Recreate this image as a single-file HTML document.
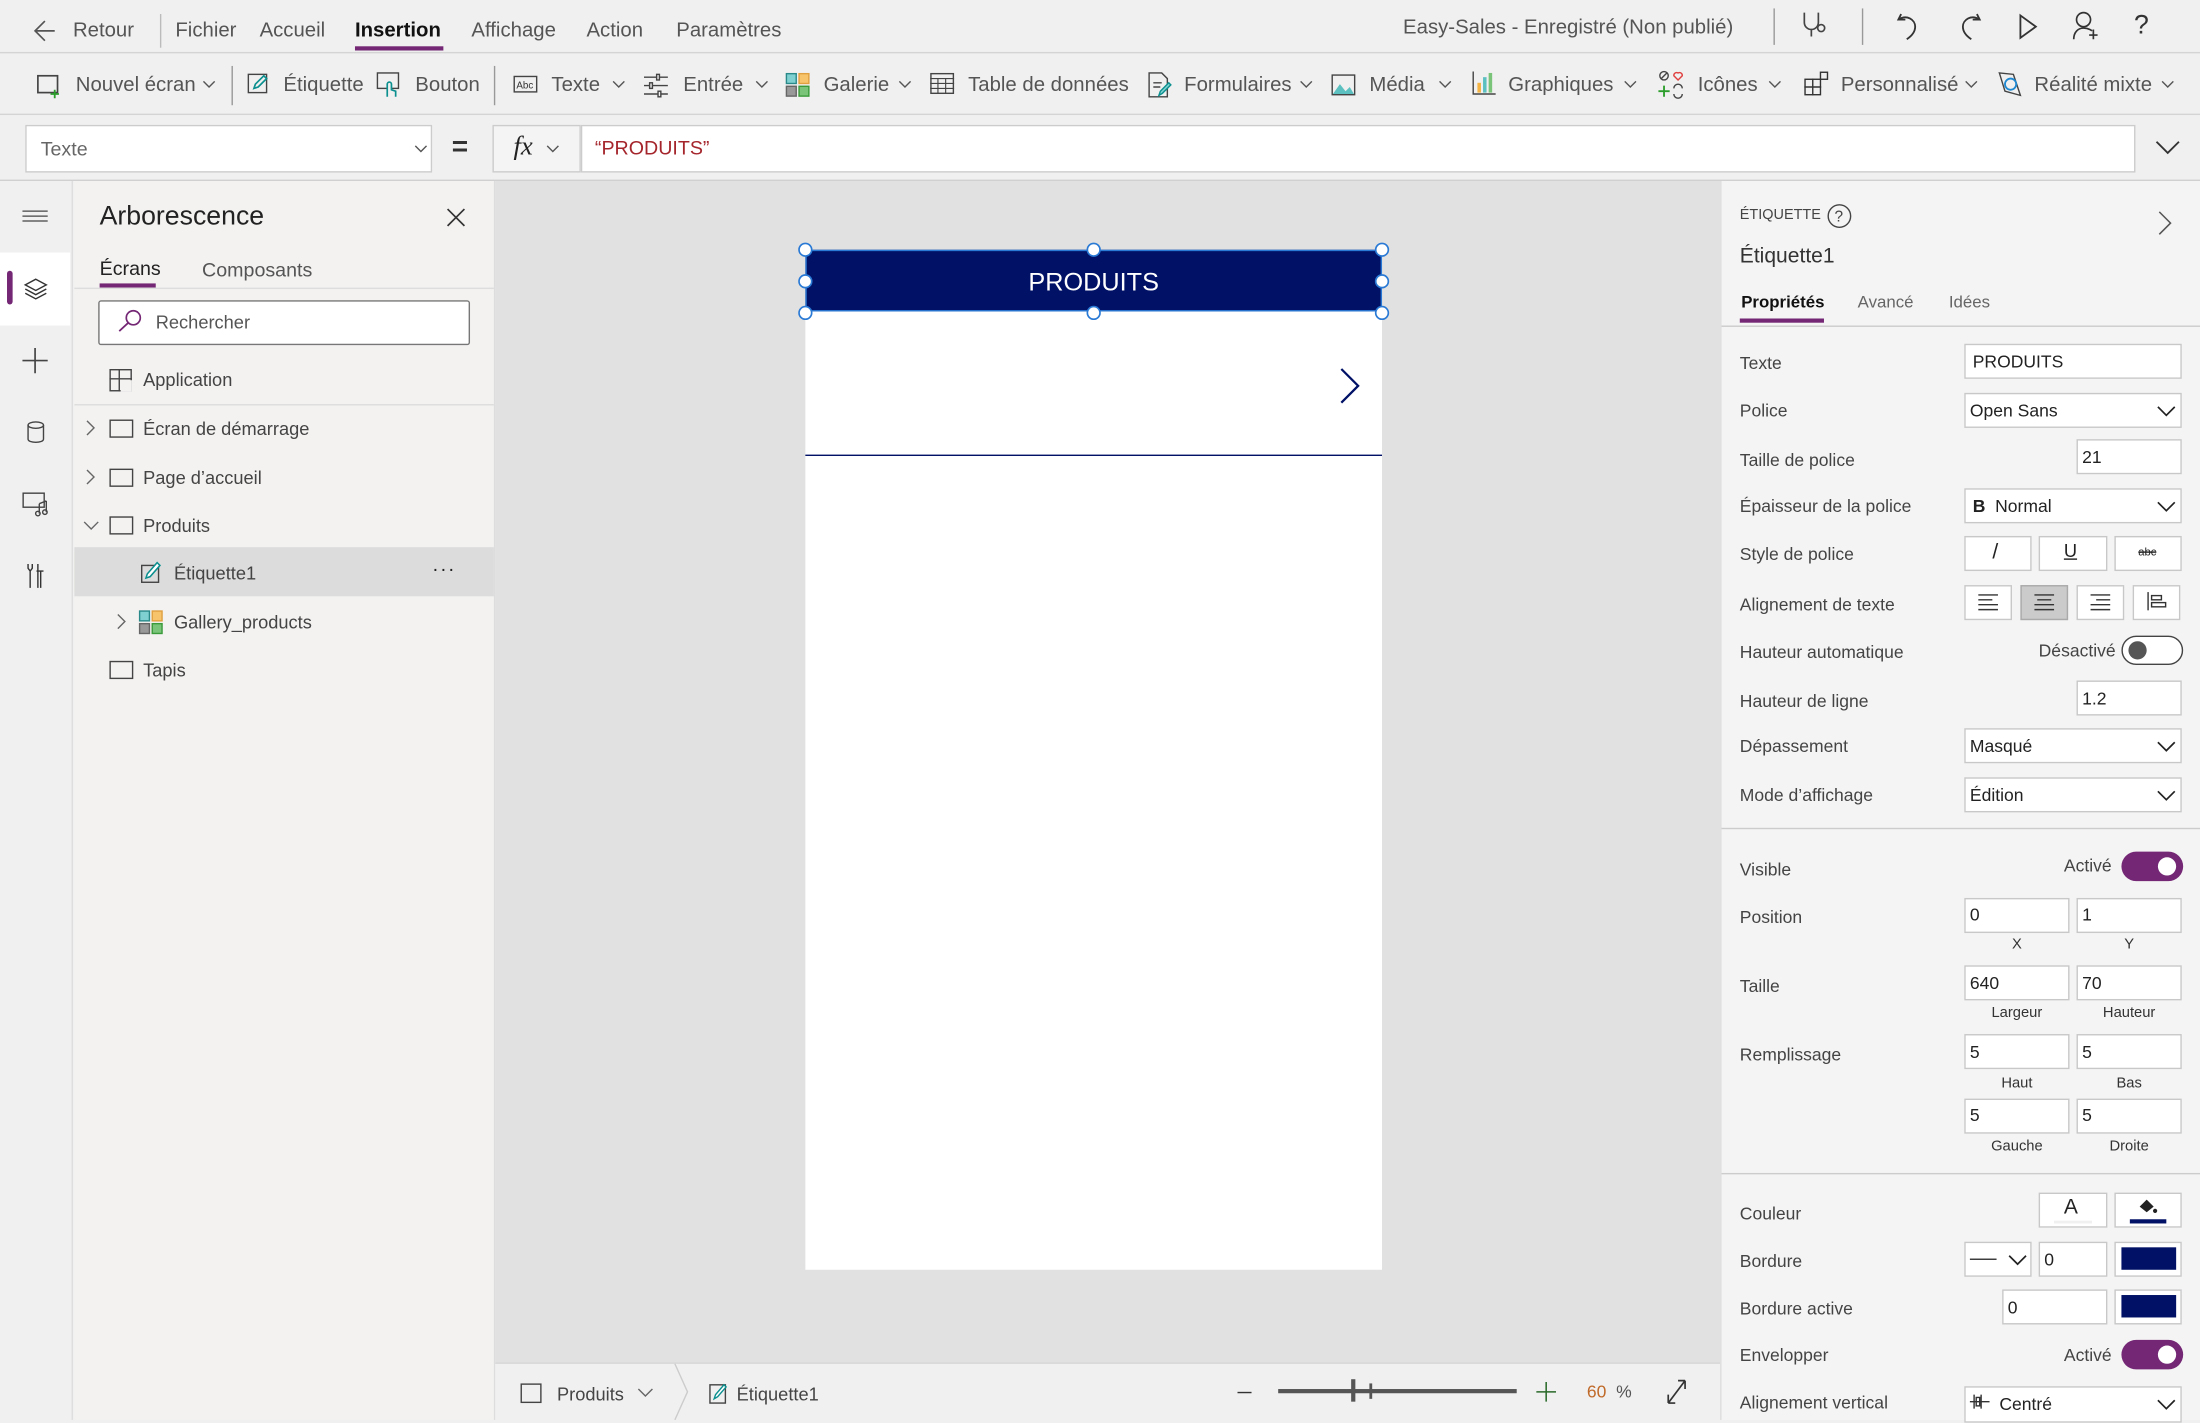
<!DOCTYPE html>
<html><head><meta charset="utf-8">
<style>
*{box-sizing:border-box;margin:0;padding:0}
html,body{width:2200px;height:1419px;overflow:hidden;background:#f0f0f0}
#r{position:absolute;left:0;top:0;width:1568px;height:1012px;transform:scale(1.40306);transform-origin:0 0;font-family:"Liberation Sans",sans-serif;color:#333}
.a{position:absolute}
.t{position:absolute;white-space:nowrap;line-height:1}
.b{position:absolute;background:#fff;border:1px solid #c8c8c8}
svg{position:absolute;overflow:visible}
.m{font-size:14.5px;color:#555}
.tb{font-size:14.5px;color:#555}
.lab{font-size:12.5px;color:#444}
.val{font-size:12.5px;color:#222}
.sm{font-size:10.5px;color:#333}
.tr{font-size:13px;color:#444}
</style></head><body><div id="r">

<!-- top menu -->
<div class="a" style="left:0;top:0;width:1568px;height:38px;background:#f0f0f0;border-bottom:1px solid #d4d4d4"></div>
<svg style="left:24px;top:14px" width="16" height="16"><path d="M15 8H1M8 1L1 8l7 7" fill="none" stroke="#555" stroke-width="1.2"/></svg>
<div class="t m" style="left:52px;top:15px">Retour</div>
<div class="a" style="left:114px;top:10px;width:1px;height:24px;background:#bbb"></div>
<div class="t m" style="left:125px;top:15px">Fichier</div>
<div class="t m" style="left:185px;top:15px">Accueil</div>
<div class="t m" style="left:253px;top:15px;font-weight:bold;color:#111">Insertion</div>
<div class="a" style="left:253px;top:33px;width:63px;height:3px;background:#742774"></div>
<div class="t m" style="left:336px;top:15px">Affichage</div>
<div class="t m" style="left:418px;top:15px">Action</div>
<div class="t m" style="left:482px;top:15px">Paramètres</div>
<div class="t m" style="left:1000px;top:13px">Easy-Sales - Enregistré (Non publié)</div>
<div class="a" style="left:1264px;top:6px;width:1px;height:26px;background:#999"></div>
<svg style="left:1284px;top:8px" width="18" height="22"><path d="M2 1v7a5 5 0 0 0 10 0V1M7 13v5" fill="none" stroke="#444" stroke-width="1.2"/><circle cx="14" cy="12" r="2.5" fill="none" stroke="#444" stroke-width="1.2"/></svg>
<div class="a" style="left:1327px;top:6px;width:1px;height:26px;background:#999"></div>
<svg style="left:1352px;top:8px" width="16" height="22"><path d="M3 2L1 6h5M1 6c6-4 12 0 12 5 0 4-3 7-6 9" fill="none" stroke="#333" stroke-width="1.3"/></svg>
<svg style="left:1396px;top:8px" width="16" height="22"><path d="M13 2l2 4h-5M15 6C9 2 3 6 3 11c0 4 3 7 6 9" fill="none" stroke="#333" stroke-width="1.3"/></svg>
<svg style="left:1439px;top:10px" width="14" height="18"><path d="M1 1l11 8-11 8z" fill="none" stroke="#333" stroke-width="1.3"/></svg>
<svg style="left:1477px;top:8px" width="20" height="22"><circle cx="8" cy="6" r="5" fill="none" stroke="#333" stroke-width="1.2"/><path d="M1 20c0-5 3-8 7-8s6 2 6 2M15 13v7M12 17h6" fill="none" stroke="#333" stroke-width="1.2"/></svg>
<div class="t" style="left:1521px;top:9px;font-size:19px;color:#333">?</div>

<!-- toolbar -->
<div class="a" style="left:0;top:39px;width:1568px;height:43px;background:#f0f0f0;border-bottom:1px solid #d4d4d4"></div>
<svg style="left:26px;top:53px" width="18" height="16"><rect x="1" y="1" width="14" height="12" fill="none" stroke="#444" stroke-width="1.2"/><path d="M13 11v6M10 14h6" stroke="#2a9d2a" stroke-width="1.3"/></svg>
<div class="t tb" style="left:54px;top:54px">Nouvel écran</div>
<svg style="left:144px;top:57px" width="10" height="6"><path d="M1 1l4 4 4-4" fill="none" stroke="#555"/></svg>
<div class="a" style="left:165px;top:47px;width:1px;height:28px;background:#999"></div>
<svg style="left:176px;top:52px" width="16" height="16"><rect x="1" y="1" width="13" height="13" fill="none" stroke="#444"/><path d="M5 11l1-3 6-6 2 2-6 6z" fill="none" stroke="#0b8f8f" stroke-width="1.2"/></svg>
<div class="t tb" style="left:202px;top:54px">Étiquette</div>
<svg style="left:268px;top:51px" width="18" height="20"><rect x="1" y="1" width="15" height="11" fill="none" stroke="#444"/><path d="M8 18v-9a1.5 1.5 0 0 1 3 0v4l3 1v4" fill="#f0f0f0" stroke="#0b8f8f" stroke-width="1.2"/></svg>
<div class="t tb" style="left:296px;top:54px">Bouton</div>
<div class="a" style="left:352px;top:47px;width:1px;height:28px;background:#999"></div>
<svg style="left:366px;top:54px" width="17" height="12"><rect x="0.5" y="0.5" width="16" height="11" fill="none" stroke="#444"/><text x="2" y="9" font-size="7" font-family="Liberation Sans" fill="#333">Abc</text></svg>
<div class="t tb" style="left:393px;top:54px">Texte</div>
<svg style="left:436px;top:57px" width="10" height="6"><path d="M1 1l4 4 4-4" fill="none" stroke="#555"/></svg>
<svg style="left:459px;top:52px" width="17" height="17"><path d="M0 3h17M0 9h17M0 15h17" stroke="#444"/><rect x="9" y="1" width="2" height="4" fill="#f0f0f0" stroke="#444"/><rect x="4" y="7" width="2" height="4" fill="#f0f0f0" stroke="#444"/><rect x="10" y="13" width="2" height="4" fill="#f0f0f0" stroke="#444"/></svg>
<div class="t tb" style="left:487px;top:54px">Entrée</div>
<svg style="left:538px;top:57px" width="10" height="6"><path d="M1 1l4 4 4-4" fill="none" stroke="#555"/></svg>
<svg style="left:560px;top:52px" width="17" height="17"><rect x="0.5" y="0.5" width="7" height="7" fill="#7fd0d0" stroke="#2a8a8a"/><rect x="9.5" y="0.5" width="7" height="7" fill="#f7c46c" stroke="#e0a040"/><rect x="0.5" y="9.5" width="7" height="7" fill="#999" stroke="#666"/><rect x="9.5" y="9.5" width="7" height="7" fill="#79c479" stroke="#3a9a3a"/></svg>
<div class="t tb" style="left:587px;top:54px">Galerie</div>
<svg style="left:640px;top:57px" width="10" height="6"><path d="M1 1l4 4 4-4" fill="none" stroke="#555"/></svg>
<svg style="left:663px;top:52px" width="17" height="15"><rect x="0.5" y="0.5" width="16" height="14" fill="none" stroke="#444"/><path d="M0 4h17M0 7.5h17M0 11h17M5.5 4v11M11 4v11" stroke="#444" stroke-width=".8"/></svg>
<div class="t tb" style="left:690px;top:54px">Table de données</div>
<svg style="left:818px;top:51px" width="17" height="19"><path d="M1 1h9l4 4v13H1z" fill="none" stroke="#444"/><path d="M4 8h6M4 11h5" stroke="#444"/><path d="M8 17l1-3 6-6 1.5 1.5-6 6z" fill="#7fd0d0" stroke="#0b8f8f"/></svg>
<div class="t tb" style="left:844px;top:54px">Formulaires</div>
<svg style="left:926px;top:57px" width="10" height="6"><path d="M1 1l4 4 4-4" fill="none" stroke="#555"/></svg>
<svg style="left:949px;top:53px" width="17" height="15"><rect x="0.5" y="0.5" width="16" height="14" fill="none" stroke="#444"/><path d="M1 14l5-7 4 5 3-3 3 5z" fill="#5cc0c0"/></svg>
<div class="t tb" style="left:976px;top:54px">Média</div>
<svg style="left:1025px;top:57px" width="10" height="6"><path d="M1 1l4 4 4-4" fill="none" stroke="#555"/></svg>
<svg style="left:1049px;top:51px" width="17" height="17"><path d="M1 0v16h16" fill="none" stroke="#444"/><rect x="4" y="8" width="2.5" height="7" fill="#f5b342"/><rect x="8" y="4" width="2.5" height="11" fill="#5cc0c0"/><rect x="12" y="1" width="2.5" height="14" fill="#79c479"/></svg>
<div class="t tb" style="left:1075px;top:54px">Graphiques</div>
<svg style="left:1157px;top:57px" width="10" height="6"><path d="M1 1l4 4 4-4" fill="none" stroke="#555"/></svg>
<svg style="left:1182px;top:50px" width="20" height="20"><circle cx="4" cy="4" r="3" fill="none" stroke="#444"/><path d="M2 6l4-4" stroke="#444"/><path d="M14 7l-3-3a2 2 0 0 1 3-2 2 2 0 0 1 3 2z" fill="none" stroke="#e04040"/><path d="M4 11v8M0 15h8" stroke="#2a9d2a" stroke-width="1.3"/><path d="M11 13a3 3 0 0 1 6 0M17 17a3 3 0 0 1-6 0" fill="none" stroke="#444"/></svg>
<div class="t tb" style="left:1210px;top:54px">Icônes</div>
<svg style="left:1260px;top:57px" width="10" height="6"><path d="M1 1l4 4 4-4" fill="none" stroke="#555"/></svg>
<svg style="left:1286px;top:51px" width="17" height="18"><rect x="0.5" y="5.5" width="11" height="11" fill="none" stroke="#333"/><path d="M6 5v12M0 11h12" stroke="#333"/><rect x="11.5" y="0.5" width="5" height="5" fill="none" stroke="#333"/></svg>
<div class="t tb" style="left:1312px;top:54px">Personnalisé</div>
<svg style="left:1400px;top:57px" width="10" height="6"><path d="M1 1l4 4 4-4" fill="none" stroke="#555"/></svg>
<svg style="left:1424px;top:51px" width="17" height="18"><path d="M1 1l10 1 5 15-11-3z" fill="none" stroke="#444"/><circle cx="9" cy="9" r="4" fill="none" stroke="#1e88d0" stroke-width="1.3"/></svg>
<div class="t tb" style="left:1450px;top:54px">Réalité mixte</div>
<svg style="left:1540px;top:57px" width="10" height="6"><path d="M1 1l4 4 4-4" fill="none" stroke="#555"/></svg>

<!-- formula bar -->
<div class="a" style="left:0;top:83px;width:1568px;height:46px;background:#f0f0f0;border-bottom:1px solid #d0d0d0"></div>
<div class="b" style="left:18px;top:89px;width:290px;height:34px;border-color:#ccc"></div>
<div class="t" style="left:29px;top:99px;font-size:14px;color:#666">Texte</div>
<svg style="left:295px;top:103px" width="10" height="6"><path d="M1 1l4 4 4-4" fill="none" stroke="#555"/></svg>
<div class="t" style="left:322px;top:95px;font-size:20px;font-weight:bold;color:#333">=</div>
<div class="a" style="left:351px;top:89px;width:63px;height:34px;background:#f4f4f4;border:1px solid #ccc"></div>
<div class="t" style="left:366px;top:95px;font-size:19px;font-style:italic;font-family:'Liberation Serif',serif;color:#222">fx</div>
<svg style="left:389px;top:103px" width="10" height="6"><path d="M1 1l4 4 4-4" fill="none" stroke="#555"/></svg>
<div class="b" style="left:414px;top:89px;width:1108px;height:34px;border-color:#ccc"></div>
<div class="t" style="left:424px;top:98px;font-size:14px;color:#a4262c">“PRODUITS”</div>
<svg style="left:1536px;top:100px" width="18" height="10"><path d="M1 1l8 8 8-8" fill="none" stroke="#333" stroke-width="1.3"/></svg>

<!-- left rail -->
<div class="a" style="left:0;top:129px;width:52px;height:883px;background:#f0f0f0;border-right:1px solid #ddd"></div>
<svg style="left:16px;top:150px" width="18" height="8"><path d="M0 .5h18M0 4h18M0 7.5h18" stroke="#444" stroke-width=".9"/></svg>
<div class="a" style="left:0;top:180px;width:50px;height:52px;background:#fff"></div>
<div class="a" style="left:5px;top:193px;width:4px;height:24px;background:#742774;border-radius:2px"></div>
<svg style="left:17px;top:198px" width="17" height="17"><path d="M8.5 1L16 5l-7.5 4L1 5z" fill="#fff" stroke="#333"/><path d="M1 8l7.5 4L16 8M1 11l7.5 4L16 11" fill="none" stroke="#333"/></svg>
<svg style="left:16px;top:248px" width="18" height="18"><path d="M9 0v18M0 9h18" stroke="#444" stroke-width="1.2"/></svg>
<svg style="left:19px;top:300px" width="13" height="16"><ellipse cx="6.5" cy="3" rx="5.5" ry="2.3" fill="none" stroke="#444"/><path d="M1 3v10c0 3 11 3 11 0V3" fill="none" stroke="#444"/></svg>
<svg style="left:16px;top:351px" width="20" height="17"><rect x="0.5" y="0.5" width="15" height="10" fill="none" stroke="#444"/><path d="M12 8v7M17 6v8M12 8l5-2" fill="none" stroke="#444"/><circle cx="11" cy="15" r="1.6" fill="none" stroke="#444"/><circle cx="16" cy="14" r="1.6" fill="none" stroke="#444"/></svg>
<svg style="left:18px;top:401px" width="14" height="19"><path d="M2 1v3l1.5 2L5 4V1M3.5 6v12M9 1v17M11 6v12M8 6h5" fill="none" stroke="#333"/></svg>

<!-- tree panel -->
<div class="a" style="left:53px;top:129px;width:300px;height:883px;background:#f3f2f1;border-right:1px solid #ddd"></div>
<div class="t" style="left:71px;top:145px;font-size:19px;color:#222;font-weight:500">Arborescence</div>
<svg style="left:318px;top:148px" width="14" height="14"><path d="M1 1l12 12M13 1L1 13" stroke="#333" stroke-width="1.2"/></svg>
<div class="t" style="left:71px;top:184px;font-size:14px;color:#222">Écrans</div>
<div class="a" style="left:71px;top:202px;width:40px;height:3px;background:#742774"></div>
<div class="t" style="left:144px;top:185px;font-size:14px;color:#555">Composants</div>
<div class="a" style="left:53px;top:205px;width:299px;height:1px;background:#ddd"></div>
<div class="b" style="left:70px;top:214px;width:265px;height:32px;border-color:#777;border-radius:2px"></div>
<svg style="left:84px;top:220px" width="18" height="18"><circle cx="11" cy="6.5" r="5" fill="none" stroke="#742774" stroke-width="1.2"/><path d="M7.5 10L1 16" stroke="#742774" stroke-width="1.3"/></svg>
<div class="t tr" style="left:111px;top:223px;color:#555">Rechercher</div>
<svg style="left:78px;top:263px" width="16" height="16"><rect x="0.5" y="0.5" width="15" height="15" fill="none" stroke="#444"/><path d="M7 0v16M0 7h16" stroke="#444"/><path d="M8 8h8v8H8z" fill="#f3f2f1"/></svg>
<div class="t tr" style="left:102px;top:264px">Application</div>
<div class="a" style="left:53px;top:288px;width:299px;height:1px;background:#ddd"></div>
<svg style="left:61px;top:299px" width="7" height="12"><path d="M1 1l5 5-5 5" fill="none" stroke="#666"/></svg>
<div class="a" style="left:78px;top:299px;width:17px;height:13px;border:1.2px solid #444"></div>
<div class="t tr" style="left:102px;top:299px">Écran de démarrage</div>
<svg style="left:61px;top:334px" width="7" height="12"><path d="M1 1l5 5-5 5" fill="none" stroke="#666"/></svg>
<div class="a" style="left:78px;top:334px;width:17px;height:13px;border:1.2px solid #444"></div>
<div class="t tr" style="left:102px;top:334px">Page d’accueil</div>
<svg style="left:59px;top:371px" width="12" height="7"><path d="M1 1l5 5 5-5" fill="none" stroke="#666"/></svg>
<div class="a" style="left:78px;top:368px;width:17px;height:13px;border:1.2px solid #444"></div>
<div class="t tr" style="left:102px;top:368px">Produits</div>
<div class="a" style="left:53px;top:390px;width:299px;height:35px;background:#dcdcdc"></div>
<svg style="left:100px;top:400px" width="16" height="16"><rect x="1" y="3" width="12" height="12" fill="none" stroke="#444"/><path d="M4 12l1-3 7-8 2 2-7 8z" fill="#fff" stroke="#0b8f8f" stroke-width="1.1"/></svg>
<div class="t tr" style="left:124px;top:402px">Étiquette1</div>
<div class="t" style="left:308px;top:398px;font-size:14px;color:#222;letter-spacing:1px">···</div>
<svg style="left:83px;top:437px" width="7" height="12"><path d="M1 1l5 5-5 5" fill="none" stroke="#666"/></svg>
<svg style="left:99px;top:435px" width="17" height="17"><rect x="0.5" y="0.5" width="7" height="7" fill="#7fd0d0" stroke="#2a8a8a"/><rect x="9.5" y="0.5" width="7" height="7" fill="#f7c46c" stroke="#e0a040"/><rect x="0.5" y="9.5" width="7" height="7" fill="#999" stroke="#666"/><rect x="9.5" y="9.5" width="7" height="7" fill="#79c479" stroke="#3a9a3a"/></svg>
<div class="t tr" style="left:124px;top:437px">Gallery_products</div>
<div class="a" style="left:78px;top:471px;width:17px;height:13px;border:1.2px solid #444"></div>
<div class="t tr" style="left:102px;top:471px">Tapis</div>

<!-- canvas -->
<div class="a" style="left:353px;top:129px;width:873px;height:842px;background:#e1e1e1"></div>
<div class="a" style="left:574px;top:178px;width:411px;height:727px;background:#fff"></div>
<div class="a" style="left:574px;top:178px;width:411px;height:44px;background:#001166;border:1px solid #2a7ad5"></div>
<div class="t" style="left:574px;top:192px;width:411px;text-align:center;font-size:18px;color:#fff">PRODUITS</div>
<svg style="left:569px;top:173px" width="422" height="55"><g fill="#fff" stroke="#2a7ad5" stroke-width="1.2"><circle cx="5" cy="5" r="4.5"/><circle cx="210.5" cy="5" r="4.5"/><circle cx="416" cy="5" r="4.5"/><circle cx="5" cy="27.5" r="4.5"/><circle cx="416" cy="27.5" r="4.5"/><circle cx="5" cy="50" r="4.5"/><circle cx="210.5" cy="50" r="4.5"/><circle cx="416" cy="50" r="4.5"/></g></svg>
<svg style="left:955px;top:262px" width="16" height="26"><path d="M1 1l12 12L1 25" fill="none" stroke="#001166" stroke-width="1.6"/></svg>
<div class="a" style="left:574px;top:324px;width:411px;height:1.3px;background:#001166"></div>

<!-- status bar -->
<div class="a" style="left:353px;top:971px;width:873px;height:41px;background:#f0f0f0;border-top:1px solid #d4d4d4"></div>
<div class="a" style="left:371px;top:986px;width:15px;height:14px;border:1.2px solid #444"></div>
<div class="t tr" style="left:397px;top:987px">Produits</div>
<svg style="left:454px;top:989px" width="12" height="7"><path d="M1 1l5 5 5-5" fill="none" stroke="#666"/></svg>
<svg style="left:480px;top:972px" width="12" height="40"><path d="M1 0l9 20-9 20" fill="none" stroke="#ccc"/></svg>
<svg style="left:505px;top:985px" width="15" height="16"><rect x="1" y="2" width="11" height="13" fill="none" stroke="#444"/><path d="M4 12l1-3 6-7 1.5 1.5-6 7z" fill="#fff" stroke="#0b8f8f"/></svg>
<div class="t tr" style="left:525px;top:987px">Étiquette1</div>
<div class="a" style="left:882px;top:992px;width:10px;height:1.2px;background:#333"></div>
<div class="a" style="left:911px;top:990px;width:170px;height:3px;background:#555"></div>
<div class="a" style="left:963px;top:983px;width:3px;height:16px;background:#555"></div>
<div class="a" style="left:976px;top:986px;width:1.5px;height:11px;background:#555"></div>
<svg style="left:1095px;top:985px" width="14" height="14"><path d="M7 0v14M0 7h14" stroke="#2a6a2a" stroke-width="1.1"/></svg>
<div class="t" style="left:1131px;top:986px;font-size:12.5px;color:#c06a2a">60 <span style="color:#555">&nbsp;%</span></div>
<svg style="left:1187px;top:983px" width="16" height="18"><path d="M2 17L14 1M2 17v-6M2 17h5M14 1v6M14 1H9" fill="none" stroke="#333" stroke-width="1.2"/></svg>

<!-- right panel -->
<div class="a" style="left:1226px;top:129px;width:342px;height:883px;background:#f4f4f4;border-left:1px solid #ddd"></div>
<div class="t" style="left:1240px;top:149px;font-size:10.3px;color:#444">ÉTIQUETTE</div>
<svg style="left:1302px;top:145px" width="18" height="18"><circle cx="9" cy="9" r="8" fill="none" stroke="#444"/><text x="5.5" y="13" font-size="11" font-family="Liberation Sans" fill="#444">?</text></svg>
<svg style="left:1538px;top:150px" width="10" height="18"><path d="M1 1l8 8-8 8" fill="none" stroke="#555" stroke-width="1.1"/></svg>
<div class="t" style="left:1240px;top:175px;font-size:15px;color:#333">Étiquette1</div>
<div class="t" style="left:1241px;top:209px;font-size:12px;font-weight:bold;color:#111">Propriétés</div>
<div class="a" style="left:1240px;top:227px;width:60px;height:3px;background:#742774"></div>
<div class="t" style="left:1324px;top:209px;font-size:12px;color:#666">Avancé</div>
<div class="t" style="left:1389px;top:209px;font-size:12px;color:#666">Idées</div>
<div class="a" style="left:1227px;top:232px;width:341px;height:1px;background:#ccc"></div>

<div class="t lab" style="left:1240px;top:253px">Texte</div>
<div class="b" style="left:1400px;top:245px;width:155px;height:25px"></div>
<div class="t val" style="left:1406px;top:252px">PRODUITS</div>
<div class="t lab" style="left:1240px;top:287px">Police</div>
<div class="b" style="left:1400px;top:280px;width:155px;height:25px"></div>
<div class="t val" style="left:1404px;top:287px">Open Sans</div>
<svg style="left:1537px;top:289px" width="14" height="8"><path d="M1 1l6 6 6-6" fill="none" stroke="#222" stroke-width="1.2"/></svg>
<div class="t lab" style="left:1240px;top:322px">Taille de police</div>
<div class="b" style="left:1480px;top:313px;width:75px;height:25px"></div>
<div class="t val" style="left:1484px;top:320px">21</div>
<div class="t lab" style="left:1240px;top:355px">Épaisseur de la police</div>
<div class="b" style="left:1400px;top:348px;width:155px;height:25px"></div>
<div class="t val" style="left:1406px;top:355px"><b>B</b>&nbsp;&nbsp;Normal</div>
<svg style="left:1537px;top:357px" width="14" height="8"><path d="M1 1l6 6 6-6" fill="none" stroke="#222" stroke-width="1.2"/></svg>
<div class="t lab" style="left:1240px;top:389px">Style de police</div>
<div class="b" style="left:1400px;top:382px;width:48px;height:25px"></div>
<div class="t" style="left:1420px;top:386px;font-size:15px;color:#222">/</div>
<div class="b" style="left:1453px;top:382px;width:49px;height:25px"></div>
<div class="t" style="left:1471px;top:386px;font-size:13px;color:#222;text-decoration:underline">U</div>
<div class="b" style="left:1507px;top:382px;width:48px;height:25px"></div>
<div class="t" style="left:1524px;top:390px;font-size:8px;color:#222;text-decoration:line-through">abc</div>
<div class="t lab" style="left:1240px;top:425px">Alignement de texte</div>
<div class="b" style="left:1400px;top:417px;width:34px;height:25px"></div>
<div class="b" style="left:1440px;top:417px;width:34px;height:25px;background:#cbcbcb;border-color:#aaa"></div>
<div class="b" style="left:1480px;top:417px;width:34px;height:25px"></div>
<div class="b" style="left:1520px;top:417px;width:34px;height:25px"></div>
<svg style="left:1410px;top:423px" width="14" height="12"><path d="M0 1h14M0 4.5h10M0 8h14M0 11.5h14" stroke="#333"/></svg>
<svg style="left:1450px;top:423px" width="14" height="12"><path d="M0 1h14M2 4.5h10M0 8h14M0 11.5h14" stroke="#333"/></svg>
<svg style="left:1490px;top:423px" width="14" height="12"><path d="M0 1h14M4 4.5h10M0 8h14M0 11.5h14" stroke="#333"/></svg>
<svg style="left:1530px;top:422px" width="14" height="14"><path d="M1 0v13" stroke="#333"/><rect x="3.5" y="2.5" width="7" height="3" fill="none" stroke="#333"/><rect x="3.5" y="7.5" width="10" height="3" fill="none" stroke="#333"/></svg>
<div class="t lab" style="left:1240px;top:459px">Hauteur automatique</div>
<div class="t lab" style="left:1453px;top:458px">Désactivé</div>
<div class="a" style="left:1512px;top:453px;width:44px;height:21px;border:1px solid #444;border-radius:11px;background:#fff"></div>
<div class="a" style="left:1517px;top:457px;width:13px;height:13px;border-radius:50%;background:#555"></div>
<div class="t lab" style="left:1240px;top:494px">Hauteur de ligne</div>
<div class="b" style="left:1480px;top:485px;width:75px;height:25px"></div>
<div class="t val" style="left:1484px;top:492px">1.2</div>
<div class="t lab" style="left:1240px;top:526px">Dépassement</div>
<div class="b" style="left:1400px;top:519px;width:155px;height:25px"></div>
<div class="t val" style="left:1404px;top:526px">Masqué</div>
<svg style="left:1537px;top:528px" width="14" height="8"><path d="M1 1l6 6 6-6" fill="none" stroke="#222" stroke-width="1.2"/></svg>
<div class="t lab" style="left:1240px;top:561px">Mode d’affichage</div>
<div class="b" style="left:1400px;top:554px;width:155px;height:25px"></div>
<div class="t val" style="left:1404px;top:561px">Édition</div>
<svg style="left:1537px;top:563px" width="14" height="8"><path d="M1 1l6 6 6-6" fill="none" stroke="#222" stroke-width="1.2"/></svg>
<div class="a" style="left:1227px;top:590px;width:341px;height:1px;background:#ccc"></div>

<div class="t lab" style="left:1240px;top:614px">Visible</div>
<div class="t lab" style="left:1471px;top:611px">Activé</div>
<div class="a" style="left:1512px;top:607px;width:44px;height:21px;border-radius:11px;background:#742774"></div>
<div class="a" style="left:1538px;top:611px;width:13px;height:13px;border-radius:50%;background:#fff"></div>
<div class="t lab" style="left:1240px;top:648px">Position</div>
<div class="b" style="left:1400px;top:640px;width:75px;height:25px"></div><div class="t val" style="left:1404px;top:646px">0</div>
<div class="b" style="left:1480px;top:640px;width:75px;height:25px"></div><div class="t val" style="left:1484px;top:646px">1</div>
<div class="t sm" style="left:1400px;top:668px;width:75px;text-align:center">X</div>
<div class="t sm" style="left:1480px;top:668px;width:75px;text-align:center">Y</div>
<div class="t lab" style="left:1240px;top:697px">Taille</div>
<div class="b" style="left:1400px;top:688px;width:75px;height:25px"></div><div class="t val" style="left:1404px;top:695px">640</div>
<div class="b" style="left:1480px;top:688px;width:75px;height:25px"></div><div class="t val" style="left:1484px;top:695px">70</div>
<div class="t sm" style="left:1400px;top:717px;width:75px;text-align:center">Largeur</div>
<div class="t sm" style="left:1480px;top:717px;width:75px;text-align:center">Hauteur</div>
<div class="t lab" style="left:1240px;top:746px">Remplissage</div>
<div class="b" style="left:1400px;top:737px;width:75px;height:25px"></div><div class="t val" style="left:1404px;top:744px">5</div>
<div class="b" style="left:1480px;top:737px;width:75px;height:25px"></div><div class="t val" style="left:1484px;top:744px">5</div>
<div class="t sm" style="left:1400px;top:767px;width:75px;text-align:center">Haut</div>
<div class="t sm" style="left:1480px;top:767px;width:75px;text-align:center">Bas</div>
<div class="b" style="left:1400px;top:783px;width:75px;height:25px"></div><div class="t val" style="left:1404px;top:789px">5</div>
<div class="b" style="left:1480px;top:783px;width:75px;height:25px"></div><div class="t val" style="left:1484px;top:789px">5</div>
<div class="t sm" style="left:1400px;top:812px;width:75px;text-align:center">Gauche</div>
<div class="t sm" style="left:1480px;top:812px;width:75px;text-align:center">Droite</div>
<div class="a" style="left:1227px;top:836px;width:341px;height:1px;background:#ccc"></div>

<div class="t lab" style="left:1240px;top:859px">Couleur</div>
<div class="b" style="left:1453px;top:850px;width:49px;height:25px"></div>
<div class="t" style="left:1471px;top:853px;font-size:15px;color:#222">A</div>
<div class="a" style="left:1464px;top:870px;width:27px;height:2px;background:#f0f0f0"></div>
<div class="b" style="left:1507px;top:850px;width:48px;height:25px"></div>
<svg style="left:1522px;top:853px" width="16" height="14"><path d="M3 7l5-5 5 5-5 4z" fill="#222"/><circle cx="14" cy="10" r="1.5" fill="#222"/></svg>
<div class="a" style="left:1518px;top:869px;width:26px;height:3px;background:#001166"></div>
<div class="t lab" style="left:1240px;top:893px">Bordure</div>
<div class="b" style="left:1400px;top:885px;width:48px;height:25px"></div>
<div class="a" style="left:1404px;top:897px;width:19px;height:1px;background:#333"></div>
<svg style="left:1431px;top:894px" width="14" height="8"><path d="M1 1l6 6 6-6" fill="none" stroke="#222" stroke-width="1.2"/></svg>
<div class="b" style="left:1453px;top:885px;width:49px;height:25px"></div><div class="t val" style="left:1457px;top:892px">0</div>
<div class="b" style="left:1507px;top:885px;width:48px;height:25px"></div>
<div class="a" style="left:1512px;top:889px;width:39px;height:16px;background:#001166"></div>
<div class="t lab" style="left:1240px;top:927px">Bordure active</div>
<div class="b" style="left:1427px;top:919px;width:75px;height:25px"></div><div class="t val" style="left:1431px;top:926px">0</div>
<div class="b" style="left:1507px;top:919px;width:48px;height:25px"></div>
<div class="a" style="left:1512px;top:923px;width:39px;height:16px;background:#001166"></div>
<div class="t lab" style="left:1240px;top:960px">Envelopper</div>
<div class="t lab" style="left:1471px;top:960px">Activé</div>
<div class="a" style="left:1512px;top:955px;width:44px;height:21px;border-radius:11px;background:#742774"></div>
<div class="a" style="left:1538px;top:959px;width:13px;height:13px;border-radius:50%;background:#fff"></div>
<div class="t lab" style="left:1240px;top:994px">Alignement vertical</div>
<div class="b" style="left:1400px;top:988px;width:155px;height:26px"></div>
<svg style="left:1404px;top:993px" width="14" height="12"><path d="M0 6h14M3 1v10M8 1v10" stroke="#333"/><rect x="4.5" y="3" width="2.5" height="6" fill="none" stroke="#333"/></svg>
<div class="t val" style="left:1425px;top:995px">Centré</div>
<svg style="left:1537px;top:997px" width="14" height="8"><path d="M1 1l6 6 6-6" fill="none" stroke="#222" stroke-width="1.2"/></svg>

</div></body></html>
